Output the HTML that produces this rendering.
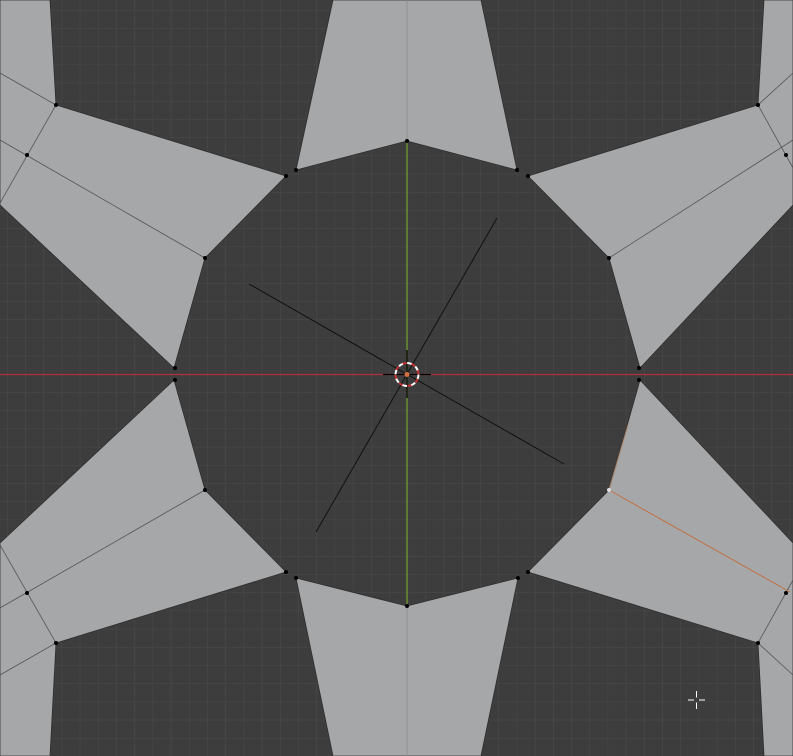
<!DOCTYPE html>
<html><head><meta charset="utf-8"><style>html,body{margin:0;padding:0;background:#3d3d3d;overflow:hidden}svg{display:block}</style></head>
<body>
<svg width="793" height="756" viewBox="0 0 793 756" xmlns="http://www.w3.org/2000/svg">
<defs>
<pattern id="g" x="7" y="10" width="18.2" height="18.2" patternUnits="userSpaceOnUse">
<path d="M0 0H18.2M0 0V18.2" stroke="#4a4a4a" stroke-width="1" fill="none"/>
</pattern>
</defs>
<rect width="793" height="756" fill="#3d3d3d"/>
<rect width="793" height="756" fill="url(#g)"/>
<g fill="#a6a7a9" stroke="#2e2e2e" stroke-width="0.8">
<polygon points="0,0 50,0 56,105 286,176 205,258 174,368 0,205"/>
<polygon points="0,543 174,380 205,490 286,572 56,643 50,756 0,756"/>
<polygon points="333,0 296,170 407,141 517,170 481,0"/>
<polygon points="333,756 296,578 407,606 518,578 481,756"/>
<polygon points="793,0 764,0 758,105 528,176 609,258 640,368 793,205"/>
<polygon points="793,543 640,380 609,490 528,572 758,643 764,756 793,756"/>
</g>
<g stroke="#555" stroke-width="0.8" fill="none">
<path d="M0 73L56 105L0 203M0 140L205 258"/>
<path d="M0 675L56 643L0 545M0 608L205 490"/>
<path d="M793 73L758 105L793 168M793 140L609 258"/>
<path d="M793 675L758 643L793 580"/>
<path d="M407 0V141M407 606V756" stroke="#8a8a8a"/>
</g>
<path d="M609 490L790 592" stroke="#c07040" stroke-width="1" fill="none"/>
<path d="M609 490L628 425" stroke="#b08a70" stroke-width="1" fill="none"/>
<path d="M0 374.5H793" stroke="#b03040" stroke-width="1.3"/>
<path d="M407 141V606" stroke="#6f9a28" stroke-width="1.3"/>
<g stroke="#111" stroke-width="1">
<path d="M249 284L564 464M497 218L316 532"/>
</g>
<g fill="#000">
<circle cx="56" cy="105" r="2"/><circle cx="27" cy="155" r="2"/><circle cx="286" cy="176" r="2"/><circle cx="205" cy="258" r="2"/><circle cx="175" cy="368" r="2"/><circle cx="175" cy="380" r="2"/>
<circle cx="205" cy="490" r="2"/><circle cx="286" cy="572" r="2"/><circle cx="296" cy="578" r="2"/><circle cx="27" cy="593" r="2"/><circle cx="56" cy="643" r="2"/>
<circle cx="296" cy="170" r="2"/><circle cx="407" cy="141" r="2"/><circle cx="517" cy="170" r="2"/><circle cx="528" cy="176" r="2"/><circle cx="609" cy="258" r="2"/>
<circle cx="639" cy="368" r="2"/><circle cx="639" cy="380" r="2"/><circle cx="528" cy="572" r="2"/><circle cx="518" cy="578" r="2"/><circle cx="407" cy="606" r="2"/>
<circle cx="758" cy="105" r="2"/><circle cx="786" cy="155" r="2"/><circle cx="758" cy="643" r="2"/><circle cx="786" cy="593" r="2"/>
</g>
<circle cx="609" cy="490" r="2" fill="#ddd"/>
<g>
<path d="M383 374.5H431M407 350V398" stroke="#000" stroke-width="1.2"/>
<circle cx="407" cy="374.5" r="11.5" fill="none" stroke="#fff" stroke-width="2" stroke-dasharray="5 4"/>
<circle cx="407" cy="374.5" r="11.5" fill="none" stroke="#c83030" stroke-width="2" stroke-dasharray="4 5" stroke-dashoffset="4.5"/>
<circle cx="407" cy="374.5" r="2.5" fill="#d07040"/>
</g>
<path d="M688 700H705M696.5 691V709" stroke="#fff" stroke-width="1"/>
<path d="M694 700H699M696.5 697.5V702.5" stroke="#3d3d3d" stroke-width="1.4"/>
</svg>
</body></html>
